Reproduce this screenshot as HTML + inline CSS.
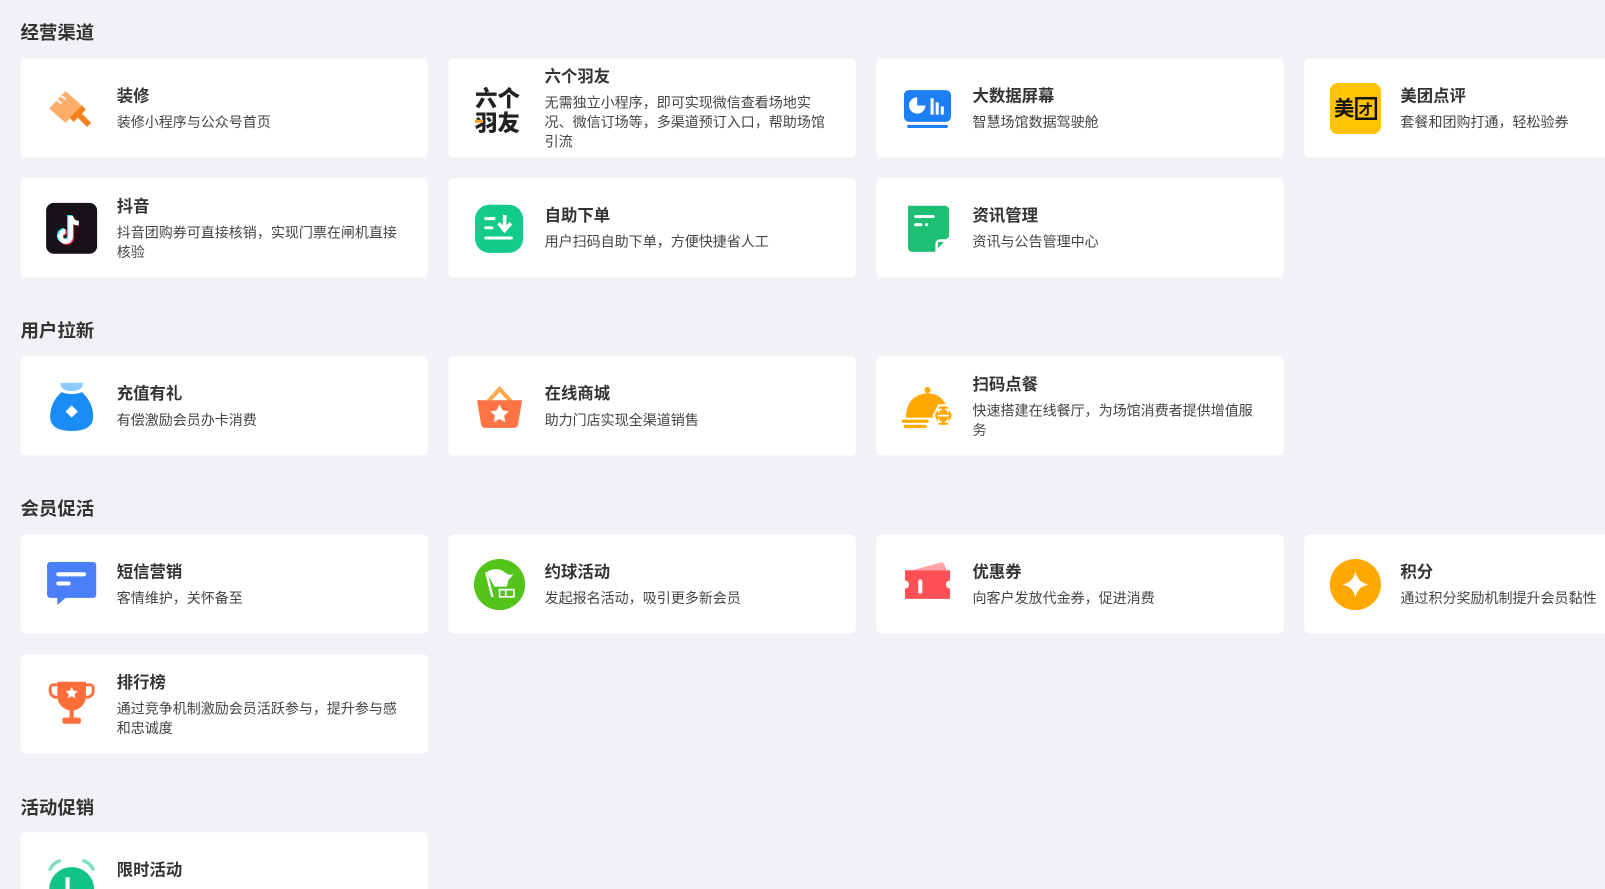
<!DOCTYPE html>
<html style="width:1605px;height:889px;overflow:hidden"><head><meta charset="utf-8"><style>
*{margin:0;padding:0;box-sizing:border-box}
body{width:1605px;height:889px;overflow:hidden;background:#f0f2f5;font-family:"Liberation Sans","Noto Sans CJK SC",sans-serif;position:relative}
#c0{position:absolute;left:0;top:0;width:1605px;height:889px;overflow:hidden}
#w{position:absolute;left:0;top:0;width:1568px;height:869px;overflow:hidden;transform:scale(1.0237);transform-origin:0 0}
.h{position:absolute;left:20px;font-size:18px;font-weight:bold;color:#333;line-height:24px}
.c{position:absolute;width:398px;height:97px;background:#fff;border-radius:5px;display:flex;align-items:center}
.c svg{position:absolute;left:25px;top:24px;width:50px;height:50px}
.t{position:absolute;left:94px;right:10px;top:2px;bottom:0;display:flex;flex-direction:column;justify-content:center}
.t b{font-size:16px;line-height:22px;color:#333;font-weight:bold}
.t span{font-size:13.7px;line-height:19px;color:#444;margin-top:4px;white-space:nowrap}
</style></head><body><div id="c0"><div id="w">
<div class="h" style="top:20px">经营渠道</div>

<div class="c" style="left:20px;top:57px"><svg viewBox="0 0 50 50"><path d="M3 25l16-17 16 14-16 17z" fill="#ffad6b"/><path d="M11 17l4 3M15 13l4 3" stroke="#fff" stroke-width="2"/><path d="M35 22l4 4-4 4 9 9-4 4-9-9-4 4-4-4z" fill="#f5811e"/></svg><div class="t"><b>装修</b><span>装修小程序与公众号首页</span></div></div>
<div class="c" style="left:438px;top:57px"><svg viewBox="0 0 50 50"><text x="1" y="23" font-size="22" font-weight="900" fill="#222" font-family="Noto Sans CJK SC">六个</text><text x="1" y="47" font-size="22" font-weight="900" fill="#222" font-family="Noto Sans CJK SC">羽友</text><rect x="1" y="36" width="8" height="3" fill="#f5a623"/></svg><div class="t"><b>六个羽友</b><span>无需独立小程序，即可实现微信查看场地实<br>况、微信订场等，多渠道预订入口，帮助场馆<br>引流</span></div></div>
<div class="c" style="left:856px;top:57px"><svg viewBox="0 0 50 50"><rect x="2" y="7" width="46" height="31" rx="5" fill="#1e7ff5"/><rect x="5" y="41" width="40" height="3" rx="1.5" fill="#1e7ff5"/><path d="M15 14a8 8 0 1 0 8 8h-8z" fill="#fff"/><rect x="28" y="15" width="3" height="16" fill="#fff"/><rect x="33" y="19" width="3" height="12" fill="#fff"/><rect x="38" y="23" width="3" height="8" fill="#fff"/></svg><div class="t"><b>大数据屏幕</b><span>智慧场馆数据驾驶舱</span></div></div>
<div class="c" style="left:1274px;top:57px;width:340px"><svg viewBox="0 0 50 50"><rect width="50" height="50" rx="8" fill="#ffc300"/><text x="4" y="32" font-size="20" font-weight="bold" fill="#111" font-family="Noto Sans CJK SC">美</text><rect x="26" y="15" width="19" height="20" fill="none" stroke="#111" stroke-width="2.4"/><text x="28" y="31" font-size="14" font-weight="bold" fill="#111" font-family="Noto Sans CJK SC">才</text></svg><div class="t"><b>美团点评</b><span>套餐和团购打通，轻松验券</span></div></div>

<div class="c" style="left:20px;top:174px"><svg viewBox="0 0 50 50"><rect width="50" height="50" rx="8" fill="#161018"/><path d="M24 13v20a5 5 0 1 1-5-5" fill="none" stroke="#25f4ee" stroke-width="4.5" transform="translate(-1.2,-1)"/><path d="M24 13v20a5 5 0 1 1-5-5" fill="none" stroke="#fe2c55" stroke-width="4.5" transform="translate(1.2,1)"/><path d="M24 13v20a5 5 0 1 1-5-5M24 13c1 5 4 7 8 7" fill="none" stroke="#fff" stroke-width="4.5"/></svg><div class="t"><b>抖音</b><span>抖音团购券可直接核销，实现门票在闸机直接<br>核验</span></div></div>
<div class="c" style="left:438px;top:174px"><svg viewBox="0 0 50 50"><rect x="1" y="2" width="47" height="47" rx="14" fill="#12cc8a"/><rect x="10" y="14" width="11" height="3" rx="1.5" fill="#fff"/><rect x="10" y="23" width="9" height="3" rx="1.5" fill="#fff"/><path d="M30 12v12M24 20l6 7 6-7" stroke="#fff" stroke-width="3.5" fill="none"/><rect x="10" y="33" width="28" height="3" rx="1.5" fill="#fff"/></svg><div class="t"><b>自助下单</b><span>用户扫码自助下单，方便快捷省人工</span></div></div>
<div class="c" style="left:856px;top:174px"><svg viewBox="0 0 50 50"><path d="M6 3h36a4 4 0 0 1 4 4v26l-14 15h-22a4 4 0 0 1-4-4z" fill="#1fbf73"/><rect x="12" y="12" width="20" height="3" rx="1.5" fill="#fff"/><rect x="12" y="20" width="8" height="3" rx="1.5" fill="#fff"/><circle cx="24" cy="21.5" r="1.5" fill="#fff"/><path d="M46 37h-9a3 3 0 0 0-3 3v10" stroke="#fff" stroke-width="2.5" fill="none"/></svg><div class="t"><b>资讯管理</b><span>资讯与公告管理中心</span></div></div>

<div class="h" style="top:311px">用户拉新</div>
<div class="c" style="left:20px;top:348px"><svg viewBox="0 0 50 50"><path d="M14 2h22q0 8-11 8t-11-8z" fill="#8ecbff"/><path d="M15 11q10 4 20 0q11 10 11 24q0 14-21 14t-21-14q0-14 11-24z" fill="#1a8cf5"/><path d="M25 24l6 6-6 6-6-6z" fill="#fff"/></svg><div class="t"><b>充值有礼</b><span>有偿激励会员办卡消费</span></div></div>
<div class="c" style="left:438px;top:348px"><svg viewBox="0 0 50 50"><path d="M14 20l11-12 11 12" stroke="#ffa94d" stroke-width="4" fill="none"/><path d="M3 19h44l-4 24a4 4 0 0 1-4 3h-28a4 4 0 0 1-4-3z" fill="#ff7345"/><path d="M25 23l3 6 6 .8-4.5 4.3 1.2 6.4-5.7-3.2-5.7 3.2 1.2-6.4-4.5-4.3 6-.8z" fill="#fff"/></svg><div class="t"><b>在线商城</b><span>助力门店实现全渠道销售</span></div></div>
<div class="c" style="left:856px;top:348px"><svg viewBox="0 0 50 50"><circle cx="25" cy="9" r="3" fill="#ffa800"/><path d="M4 36q0-22 21-24q15 1 19 14l-8 10z" fill="#ffa800"/><rect x="0" y="38" width="26" height="3" fill="#ffa800"/><rect x="2" y="43" width="22" height="3" fill="#ffa800"/><path d="M36 24l9 0 5 10-5 10h-9l-5-10z" fill="#ffa800" stroke="#fff" stroke-width="2"/><path d="M36 31v-3h3M42 28h3v3M45 37v3h-3M39 40h-3v-3M35 34h11" stroke="#fff" stroke-width="1.6" fill="none"/></svg><div class="t"><b>扫码点餐</b><span>快速搭建在线餐厅，为场馆消费者提供增值服<br>务</span></div></div>

<div class="h" style="top:485px">会员促活</div>
<div class="c" style="left:20px;top:522px"><svg viewBox="0 0 50 50"><path d="M4 3h42a3 3 0 0 1 3 3v29a3 3 0 0 1-3 3h-27l-8 7v-7h-7a3 3 0 0 1-3-3v-29a3 3 0 0 1 3-3z" fill="#4a7ff7"/><rect x="10" y="13" width="29" height="4" rx="2" fill="#fff"/><rect x="10" y="22" width="14" height="4" rx="2" fill="#fff"/></svg><div class="t"><b>短信营销</b><span>客情维护，关怀备至</span></div></div>
<div class="c" style="left:438px;top:522px"><svg viewBox="0 0 50 50"><circle cx="25" cy="25" r="25" fill="#52c41a"/><path d="M12 13l6 24" stroke="#fff" stroke-width="2.4"/><path d="M12 13q10-6 18 0t10-2q-2 6-6 9l-2 7h-12z" fill="#fff"/><rect x="25" y="30" width="14" height="7" fill="none" stroke="#fff" stroke-width="1.6"/><path d="M31 30v7" stroke="#fff" stroke-width="1.6"/></svg><div class="t"><b>约球活动</b><span>发起报名活动，吸引更多新会员</span></div></div>
<div class="c" style="left:856px;top:522px"><svg viewBox="0 0 50 50"><path d="M10 11l30-8 4 8z" fill="#ffa3a3"/><path d="M3 11h44v10a4 4 0 0 0 0 8v10h-44v-10a4 4 0 0 0 0-8z" fill="#ff5055"/><rect x="16" y="20" width="4" height="14" rx="2" fill="#fff"/></svg><div class="t"><b>优惠券</b><span>向客户发放代金券，促进消费</span></div></div>
<div class="c" style="left:1274px;top:522px;width:340px"><svg viewBox="0 0 50 50"><circle cx="25" cy="25" r="25" fill="#ffa900"/><path d="M25 12q2 11 13 13q-11 2-13 13q-2-11-13-13q11-2 13-13z" fill="#fff"/></svg><div class="t"><b>积分</b><span>通过积分奖励机制提升会员黏性</span></div></div>

<div class="c" style="left:20px;top:639px"><svg viewBox="0 0 50 50"><path d="M11 3h28v14a14 14 0 0 1-28 0z" fill="#ff6d3b"/><path d="M11 6h-4a3 3 0 0 0-3 3v3a6 6 0 0 0 7 6M39 6h4a3 3 0 0 1 3 3v3a6 6 0 0 1-7 6" stroke="#ff6d3b" stroke-width="2.8" fill="none"/><rect x="23" y="29" width="4" height="10" fill="#ff6d3b"/><rect x="16" y="38" width="18" height="6" rx="2" fill="#ff6d3b"/><path d="M25 8l1.8 3.6 4 .6-2.9 2.8.7 4-3.6-1.9-3.6 1.9.7-4-2.9-2.8 4-.6z" fill="#fff"/></svg><div class="t"><b>排行榜</b><span>通过竞争机制激励会员活跃参与，提升参与感<br>和忠诚度</span></div></div>

<div class="h" style="top:777px">活动促销</div>
<div class="c" style="left:20px;top:813px"><svg viewBox="0 0 50 50"><path d="M4 12q3-6 9-8M46 12q-3-6-9-8" stroke="#7fe0bd" stroke-width="3.5" fill="none" stroke-linecap="round"/><circle cx="25" cy="32" r="22" fill="#12c48a"/><path d="M21 20v15h10" stroke="#fff" stroke-width="4" fill="none"/></svg><div class="t" style="justify-content:flex-start;top:27px"><b>限时活动</b></div></div>
</div></div></body></html>
